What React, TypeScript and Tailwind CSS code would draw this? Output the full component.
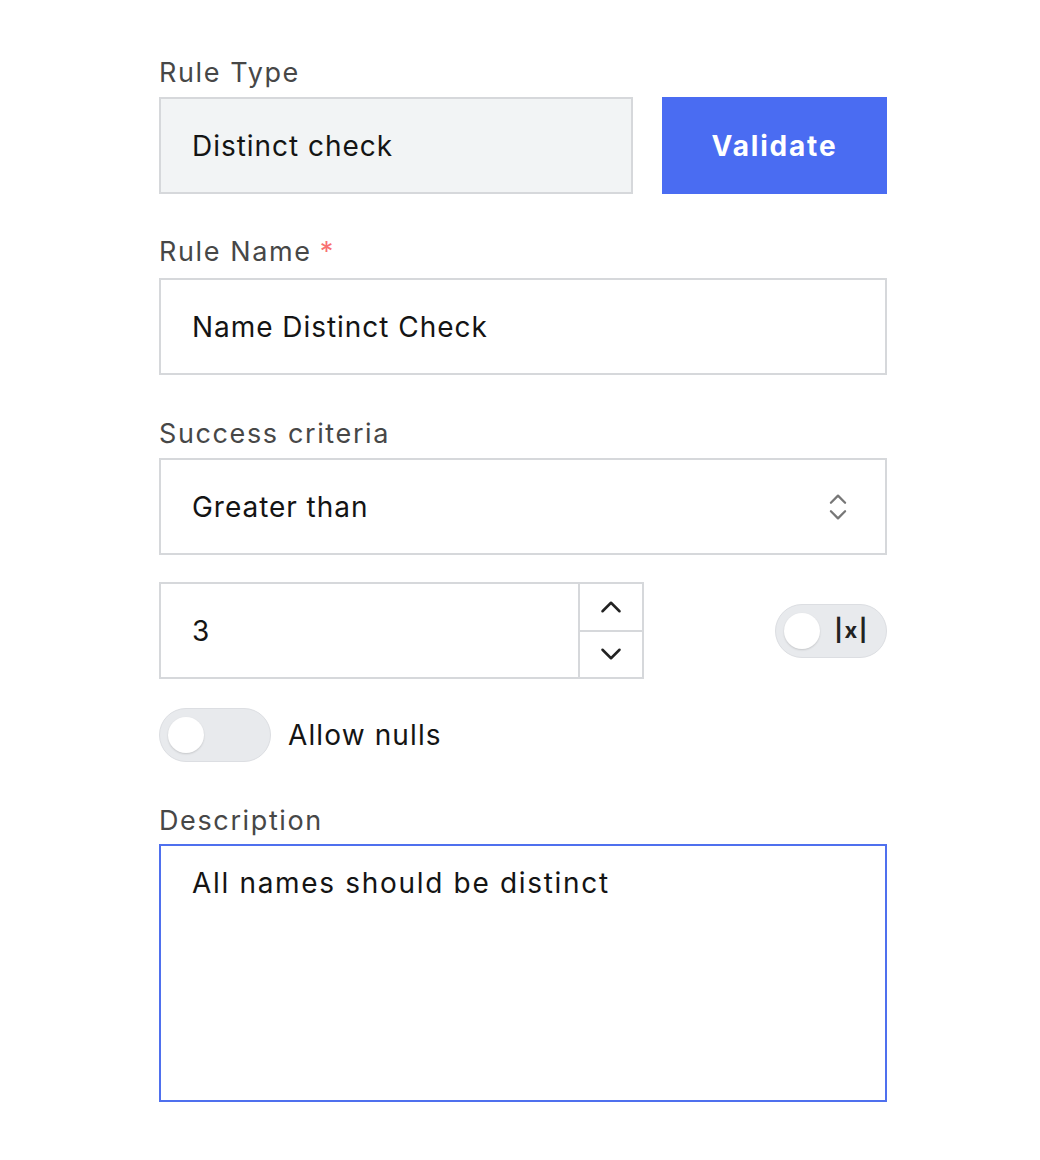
import { ChevronDown, ChevronUp, ChevronsUpDown } from 'lucide-react';

const font = { fontFamily: 'Inter, "Noto Sans", sans-serif' };

function Label({ text, required }: { text: string; required?: boolean }) {
  return (
    <div className="text-[27px] leading-none tracking-[0.06em] text-[#474747]">
      {text}
      {required && <span className="ml-2 text-[#f87171]">*</span>}
    </div>
  );
}

function Toggle({ text }: { text?: string }) {
  return (
    <div className="flex h-[54px] w-[112px] items-center rounded-full border border-[#dcdee2] bg-[#e8eaed] px-[8px]">
      <div className="h-[36px] w-[36px] rounded-full bg-white shadow-[0_1px_2px_rgba(0,0,0,0.15)]" />
      {text && <span className="ml-auto mr-[9px] text-[22px] font-bold tracking-[0.08em] text-[#222]">{text}</span>}
    </div>
  );
}

export default function App() {
  return (
    <div className="min-h-[1160px] bg-white pl-[159px] pt-[59px] tracking-[0.06em]" style={font}>
      <div className="flex w-[728px] flex-col">
        <Label text="Rule Type" />
        <div className="mt-[11px] flex gap-[29px]">
          <div className="flex h-[97px] flex-1 items-center border-2 border-[#d6d8db] bg-[#f2f4f5] pl-[31px] text-[28px] text-[#141414]">
            Distinct check
          </div>
          <button
            type="button"
            className="flex h-[97px] w-[225px] items-center justify-center bg-[#4a6cf2] text-[28px] font-bold tracking-[0.065em] text-white"
          >
            Validate
          </button>
        </div>

        <div className="mt-[44px]">
          <Label text="Rule Name" required />
        </div>
        <div className="mt-[13px] flex h-[97px] items-center border-2 border-[#d6d8db] pl-[31px] text-[28px] text-[#141414]">
          Name Distinct Check
        </div>

        <div className="mt-[45px]">
          <Label text="Success criteria" />
        </div>
        <div className="mt-[11px] flex h-[97px] items-center border-2 border-[#d6d8db] pl-[31px] pr-[30px] text-[28px] text-[#141414]">
          <span className="flex-1">Greater than</span>
          <ChevronsUpDown className="h-[34px] w-[34px] text-[#777]" strokeWidth={1.6} />
        </div>

        <div className="mt-[27px] flex items-center justify-between">
          <div className="flex h-[97px] w-[485px] border-2 border-[#d6d8db]">
            <div className="flex flex-1 items-center pl-[31px] text-[28px] text-[#141414]">3</div>
            <div className="flex w-[64px] flex-col border-l-2 border-[#d6d8db]">
              <div className="flex flex-1 items-center justify-center border-b-2 border-[#d6d8db]">
                <ChevronUp className="h-[34px] w-[34px] text-[#222]" strokeWidth={1.8} />
              </div>
              <div className="flex flex-1 items-center justify-center">
                <ChevronDown className="h-[34px] w-[34px] text-[#222]" strokeWidth={1.8} />
              </div>
            </div>
          </div>
          <Toggle text="|x|" />
        </div>

        <div className="mt-[29px] flex items-center gap-[17px]">
          <Toggle />
          <span className="text-[28px] tracking-[0.04em] text-[#141414]">Allow nulls</span>
        </div>

        <div className="mt-[45px]">
          <Label text="Description" />
        </div>
        <textarea
          className="mt-[10px] h-[258px] resize-none border-2 border-[#4f70ee] px-[31px] pt-[16px] text-[28px] tracking-[0.06em] text-[#141414] outline-none"
          defaultValue="All names should be distinct"
        />
      </div>
    </div>
  );
}
